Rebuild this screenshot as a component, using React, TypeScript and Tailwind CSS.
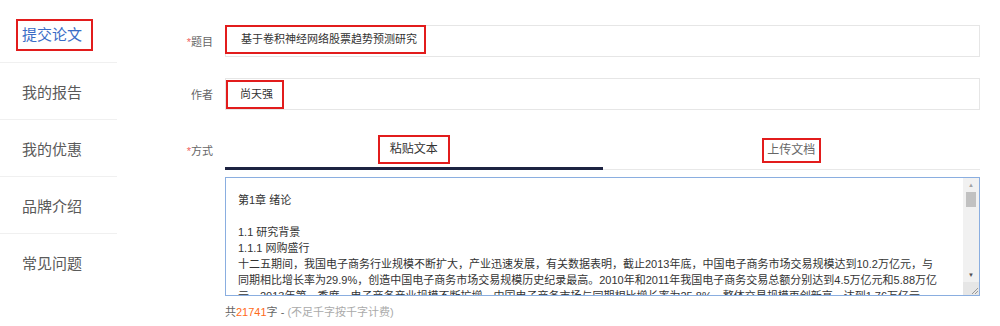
import React from "react";

const navItems = ["提交论文", "我的报告", "我的优惠", "品牌介绍", "常见问题"];

const lines = [
  "第1章 绪论",
  "",
  "1.1 研究背景",
  "1.1.1 网购盛行",
  "十二五期间，我国电子商务行业规模不断扩大，产业迅速发展，有关数据表明，截止2013年底，中国电子商务市场交易规模达到10.2万亿元，与",
  "同期相比增长率为29.9%，创造中国电子商务市场交易规模历史纪录最高。2010年和2011年我国电子商务交易总额分别达到4.5万亿元和5.88万亿",
  "元，2013年第一季度，电子商务产业规模不断扩增，中国电子商务市场与同期相比增长率为25.8%，整体交易规模再创新高，达到1.76万亿元，",
];

const font = { fontFamily: '"Liberation Sans", "Noto Sans CJK SC", sans-serif' };

const Label = ({ text, required }: { text: string; required?: boolean }) => (
  <div className="w-[73px] shrink-0 pt-[2px] text-right text-[11px] text-[#666]">
    {required && <span className="text-[#f06060]">*</span>}
    {text}
  </div>
);

export default function App() {
  return (
    <div className="flex w-[1000px] h-[326px] bg-white overflow-hidden" style={font}>
      {/* Sidebar */}
      <aside className="w-[117px] shrink-0 pt-[6px]">
        {navItems.map((item, i) => (
          <div
            key={item}
            className={`h-[57px] flex items-center ${i < 4 ? "border-b border-[#f0f0f0]" : ""}`}
          >
            {i === 0 ? (
              <span className="ml-[16px] mt-[1px] h-[32px] flex items-center border-2 border-[#e21c1c] pl-[4px] pr-[9px] pt-[2px] text-[15px] text-[#3a6cc6]">
                {item}
              </span>
            ) : (
              <span className="pl-[22px] pt-[4px] text-[15px] text-[#5a5a5a]">{item}</span>
            )}
          </div>
        ))}
      </aside>

      {/* Form */}
      <main className="flex-1 pl-[23px] pr-[20px] pt-[25px]">
        <div className="flex items-center gap-[12px]">
          <Label text="题目" required />
          <div className="flex-1 h-[32px] border border-[#e6e6e6] flex items-start">
            <span className="-ml-px -mt-px h-[29px] w-[201px] border-2 border-[#e21c1c] flex items-center pl-[14px] text-[11px] text-[#333]">
              基于卷积神经网络股票趋势预测研究
            </span>
          </div>
        </div>

        <div className="flex items-center gap-[12px] mt-[21px]">
          <Label text="作者" />
          <div className="flex-1 h-[32px] border border-[#e6e6e6] flex items-center">
            <span className="h-[29px] w-[58px] border-2 border-[#e21c1c] flex items-center pl-[12px] text-[11px] text-[#333]">
              尚天强
            </span>
          </div>
        </div>

        <div className="flex items-center gap-[12px] mt-[21px]">
          <Label text="方式" required />
          <div className="flex-1 flex h-[39px]">
            <div className="flex-1 flex items-center justify-center border-b-[3px] border-[#1d2341]">
              <span className="h-[29px] w-[72px] border-2 border-[#e21c1c] flex items-center justify-center text-[12px] text-[#333]">
                粘贴文本
              </span>
            </div>
            <div className="flex-1 flex items-center justify-center border-b border-[#e8e8e8]">
              <span className="h-[25px] w-[59px] border-2 border-[#e21c1c] flex items-center justify-center text-[12px] text-[#666]">
                上传文档
              </span>
            </div>
          </div>
        </div>

        <div className="flex gap-[12px] mt-[7px]">
          <div className="w-[73px] shrink-0" />
          <div className="flex-1 h-[119px] border border-[#8aaee0] flex">
            <div className="flex-1 pl-[12px] pt-[14px] overflow-hidden text-[11px] leading-[16px] text-[#333]">
              {lines.map((l, i) => (
                <div key={i} className="whitespace-nowrap h-[16px]">
                  {l}
                </div>
              ))}
            </div>
            <div className="w-[16px] shrink-0 bg-[#f1f1f1] flex flex-col items-center">
              <div className="h-[14px] flex items-center justify-center text-[6px] text-[#a3a3a3]">▲</div>
              <div className="w-[10px] h-[15px] bg-[#c1c1c1]" />
              <div className="flex-1" />
              <div className="h-[14px] flex items-center justify-center text-[6px] text-[#505050]">▼</div>
              <div className="h-[13px] w-full bg-[#e6e6e6] flex items-end justify-end">
                <svg width="10" height="10" viewBox="0 0 10 10">
                  <path d="M9 3 L3 9 M9 6 L6 9" stroke="#999" strokeWidth="1" />
                </svg>
              </div>
            </div>
          </div>
        </div>

        <div className="flex gap-[12px] mt-[8px] text-[11px] leading-[16px]">
          <div className="w-[73px] shrink-0" />
          <div className="text-[#666]">
            共<span className="text-[#ff6a1a]">21741</span>字 - <span className="text-[#aaa]">(不足千字按千字计费)</span>
          </div>
        </div>
      </main>
    </div>
  );
}
